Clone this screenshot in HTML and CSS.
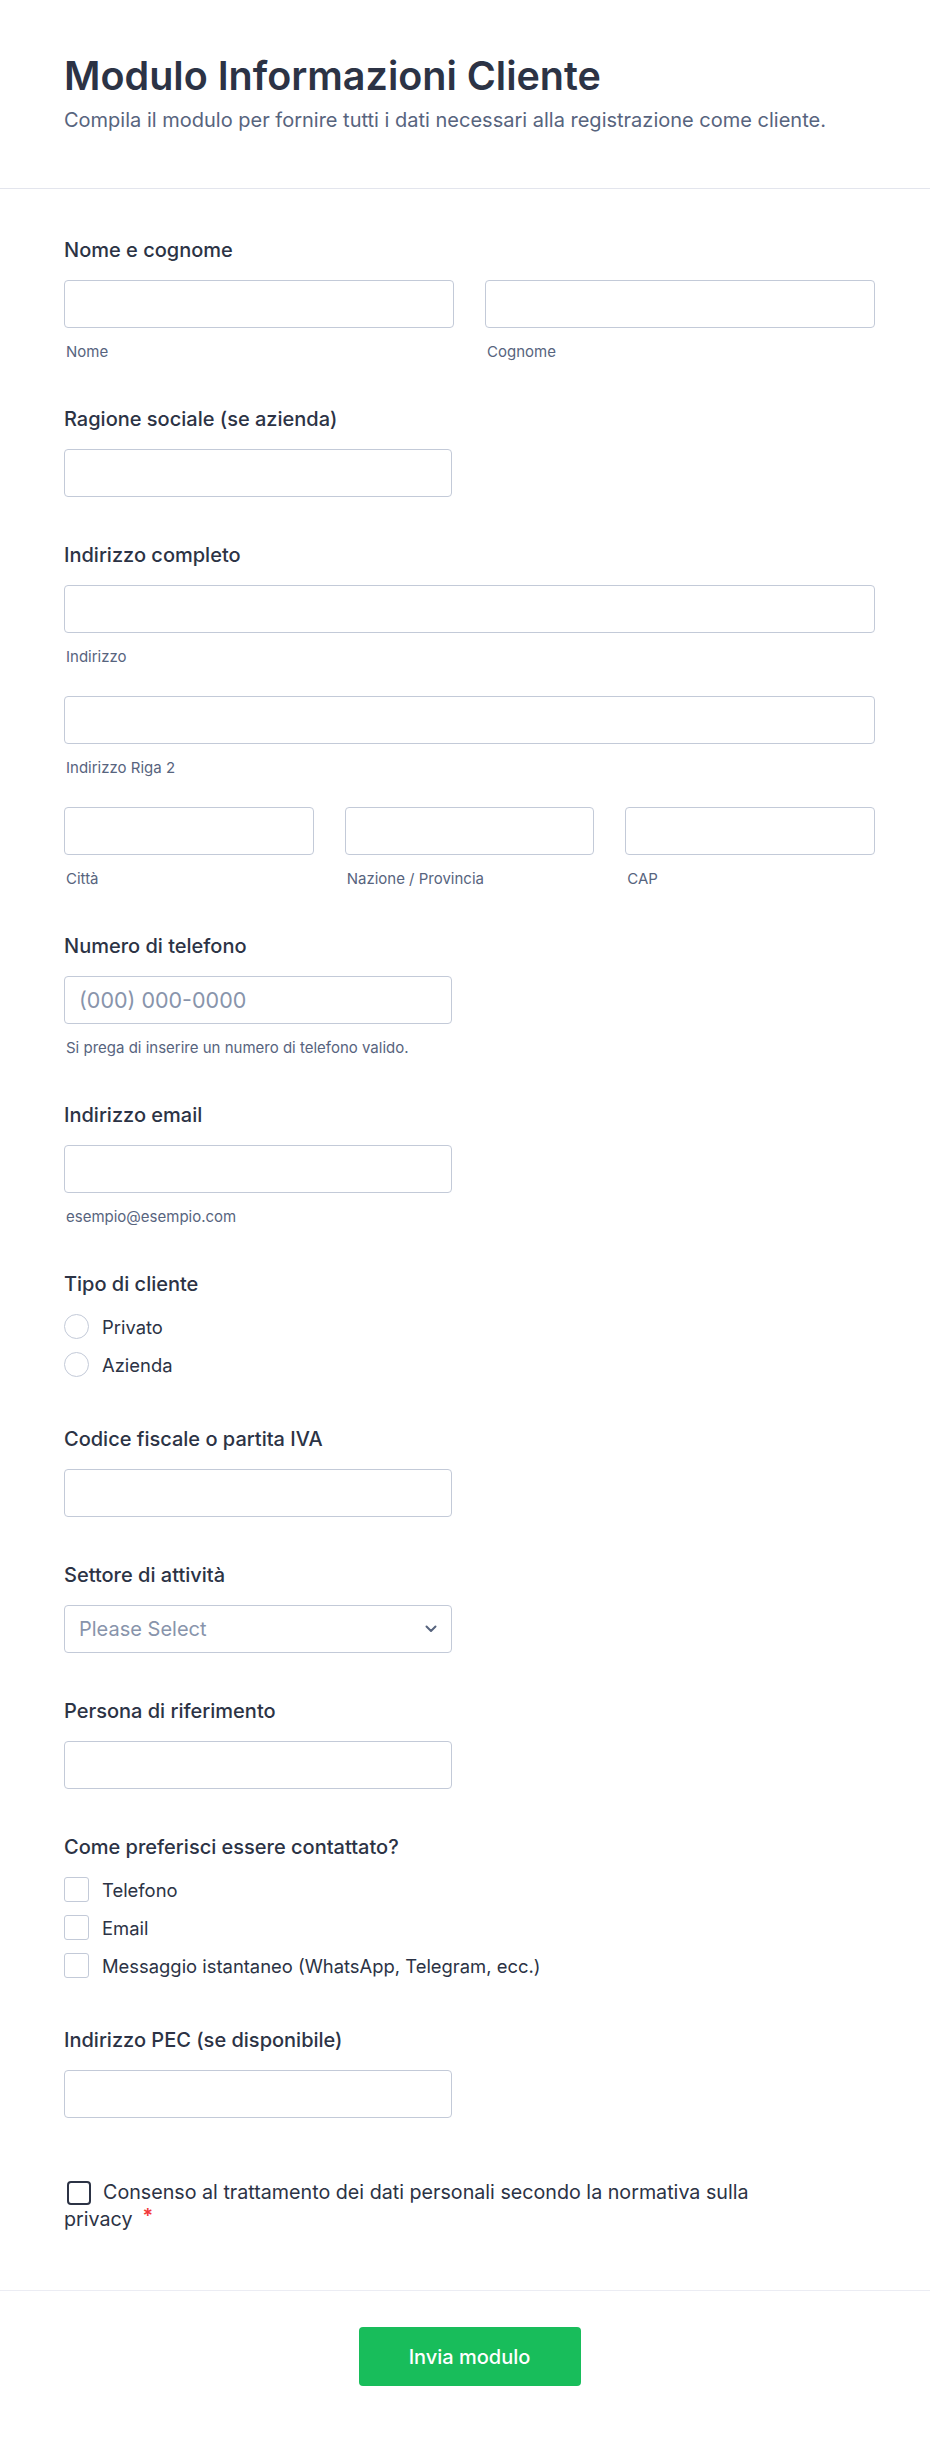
FILE: index.html
```html
<!DOCTYPE html>
<html lang="it">
<head>
<meta charset="utf-8">
<title>Modulo Informazioni Cliente</title>
<link rel="stylesheet" href="styles.css">
</head>
<body>
<div class="page">
  <header class="form-header">
    <h1 class="form-title">Modulo Informazioni Cliente</h1>
    <p class="form-subtitle">Compila il modulo per fornire tutti i dati necessari alla registrazione come cliente.</p>
  </header>

  <ul class="form-list">
    <li class="field">
      <label class="field-label">Nome e cognome</label>
      <div class="grid grid-2">
        <div class="sub">
          <input class="input" type="text">
          <span class="sublabel">Nome</span>
        </div>
        <div class="sub">
          <input class="input" type="text">
          <span class="sublabel">Cognome</span>
        </div>
      </div>
    </li>

    <li class="field">
      <label class="field-label">Ragione sociale (se azienda)</label>
      <input class="input input-half" type="text">
    </li>

    <li class="field">
      <label class="field-label">Indirizzo completo</label>
      <div class="address">
        <div class="sub">
          <input class="input" type="text">
          <span class="sublabel">Indirizzo</span>
        </div>
        <div class="sub">
          <input class="input" type="text">
          <span class="sublabel">Indirizzo Riga 2</span>
        </div>
        <div class="grid grid-3">
          <div class="sub">
            <input class="input" type="text">
            <span class="sublabel">Città</span>
          </div>
          <div class="sub">
            <input class="input" type="text">
            <span class="sublabel">Nazione / Provincia</span>
          </div>
          <div class="sub">
            <input class="input" type="text">
            <span class="sublabel">CAP</span>
          </div>
        </div>
      </div>
    </li>

    <li class="field">
      <label class="field-label">Numero di telefono</label>
      <div class="sub">
        <input class="input input-half input-phone" type="text" placeholder="(000) 000-0000">
        <span class="sublabel">Si prega di inserire un numero di telefono valido.</span>
      </div>
    </li>

    <li class="field">
      <label class="field-label">Indirizzo email</label>
      <div class="sub">
        <input class="input input-half" type="text">
        <span class="sublabel">esempio@esempio.com</span>
      </div>
    </li>

    <li class="field field-options">
      <span class="field-label">Tipo di cliente</span>
      <div class="options">
        <div class="option"><span class="radio"></span><span class="option-text">Privato</span></div>
        <div class="option"><span class="radio"></span><span class="option-text">Azienda</span></div>
      </div>
    </li>

    <li class="field">
      <label class="field-label">Codice fiscale o partita IVA</label>
      <input class="input input-half" type="text">
    </li>

    <li class="field">
      <label class="field-label">Settore di attività</label>
      <div class="select input-half">
        <span class="select-placeholder">Please Select</span>
        <svg class="select-arrow" width="12" height="8" viewBox="0 0 12 8" aria-hidden="true"><path d="M1.5 1.5 L6 6 L10.5 1.5" fill="none" stroke="#57647e" stroke-width="2" stroke-linecap="round" stroke-linejoin="round"/></svg>
      </div>
    </li>

    <li class="field">
      <label class="field-label">Persona di riferimento</label>
      <input class="input input-half" type="text">
    </li>

    <li class="field field-options">
      <span class="field-label">Come preferisci essere contattato?</span>
      <div class="options">
        <div class="option"><span class="checkbox"></span><span class="option-text">Telefono</span></div>
        <div class="option"><span class="checkbox"></span><span class="option-text">Email</span></div>
        <div class="option"><span class="checkbox"></span><span class="option-text">Messaggio istantaneo (WhatsApp, Telegram, ecc.)</span></div>
      </div>
    </li>

    <li class="field">
      <label class="field-label">Indirizzo PEC (se disponibile)</label>
      <input class="input input-half" type="text">
    </li>

    <li class="field field-consent">
      <p class="consent"><span class="consent-box"></span>Consenso al trattamento dei dati personali secondo la normativa sulla privacy<span class="required">*</span></p>
    </li>
  </ul>

  <footer class="form-footer">
    <button class="submit" type="button">Invia modulo</button>
  </footer>
</div>
</body>
</html>
```

FILE: styles.css
```css
* { box-sizing: border-box; }

html, body {
  margin: 0;
  padding: 0;
  background: #ffffff;
}

body {
  font-family: Inter, "Noto Sans", "Liberation Sans", sans-serif;
  color: #2c3345;
}

.page {
  width: 930px;
}

.form-header {
  padding: 52px 55px 54px 64px;
  border-bottom: 1px solid #e3e5ed;
}

.form-title {
  margin: 0;
  font-size: 39.5px;
  line-height: 48px;
  font-weight: 600;
  color: #2c3345;
}

.form-subtitle {
  margin: 7px 0 0;
  font-size: 20px;
  line-height: 27px;
  color: #57647e;
}

.form-list {
  list-style: none;
  margin: 0;
  padding: 26px 55px 0 64px;
}

.field {
  padding: 23px 0 23px;
}

.field-label {
  display: block;
  font-size: 20px;
  line-height: 24px;
  font-weight: 500;
  color: #2c3345;
  margin-bottom: 18px;
}

.input {
  display: block;
  width: 100%;
  height: 48px;
  border: 1px solid #c3cad8;
  border-radius: 4px;
  background: #fff;
  padding: 0 14px;
  font-family: inherit;
  font-size: 20px;
  color: #2c3345;
  outline: none;
}

.input::placeholder {
  color: #8894ab;
}

.input-phone {
  font-size: 21.5px;
}

.input-half {
  width: 388px;
}

.sub {
  display: flex;
  flex-direction: column;
}

.sublabel {
  display: block;
  margin-top: 15px;
  padding-left: 2px;
  font-size: 15px;
  line-height: 18px;
  color: #57647e;
}

.grid {
  display: grid;
  column-gap: 31px;
}

.grid-2 { grid-template-columns: 1fr 1fr; }
.grid-3 { grid-template-columns: 1fr 1fr 1fr; }

.address {
  display: flex;
  flex-direction: column;
  row-gap: 30px;
}

.select {
  height: 48px;
  border: 1px solid #c3cad8;
  border-radius: 4px;
  display: flex;
  align-items: center;
  justify-content: space-between;
  padding: 0 14px 0 14px;
}

.select-placeholder {
  font-size: 20px;
  color: #8894ab;
}

.select-arrow {
  display: block;
}

.options {
  display: flex;
  flex-direction: column;
  row-gap: 13px;
  padding-bottom: 4px;
}

.option {
  display: flex;
  align-items: center;
  column-gap: 13px;
  height: 25px;
}

.radio {
  width: 25px;
  height: 25px;
  border: 1px solid #c3cad8;
  border-radius: 50%;
  flex: none;
}

.checkbox {
  width: 25px;
  height: 25px;
  border: 1px solid #c3cad8;
  border-radius: 3px;
  flex: none;
}

.option-text {
  font-size: 18.4px;
  line-height: 24px;
  color: #2c3345;
}

.field-consent {
  padding-top: 38px;
  padding-bottom: 57px;
}

.consent {
  margin: 0;
  max-width: 740px;
  font-size: 19.7px;
  line-height: 27px;
  color: #2c3345;
}

.consent-box {
  display: inline-block;
  width: 24px;
  height: 24px;
  border: 2px solid #2c3345;
  border-radius: 4px;
  margin: 0 12px 0 3px;
  vertical-align: -6px;
}

.required {
  color: #f23a3c;
  margin-left: 10px;
  font-weight: 600;
  position: relative;
  top: -3px;
}

.form-footer {
  border-top: 1px solid #ebecf3;
  padding: 36px 55px 51px 64px;
  display: flex;
  justify-content: center;
}

.submit {
  width: 222px;
  height: 59px;
  border: none;
  border-radius: 4px;
  background: #18bd5b;
  color: #ffffff;
  font-family: inherit;
  font-size: 20px;
  font-weight: 500;
}
```
